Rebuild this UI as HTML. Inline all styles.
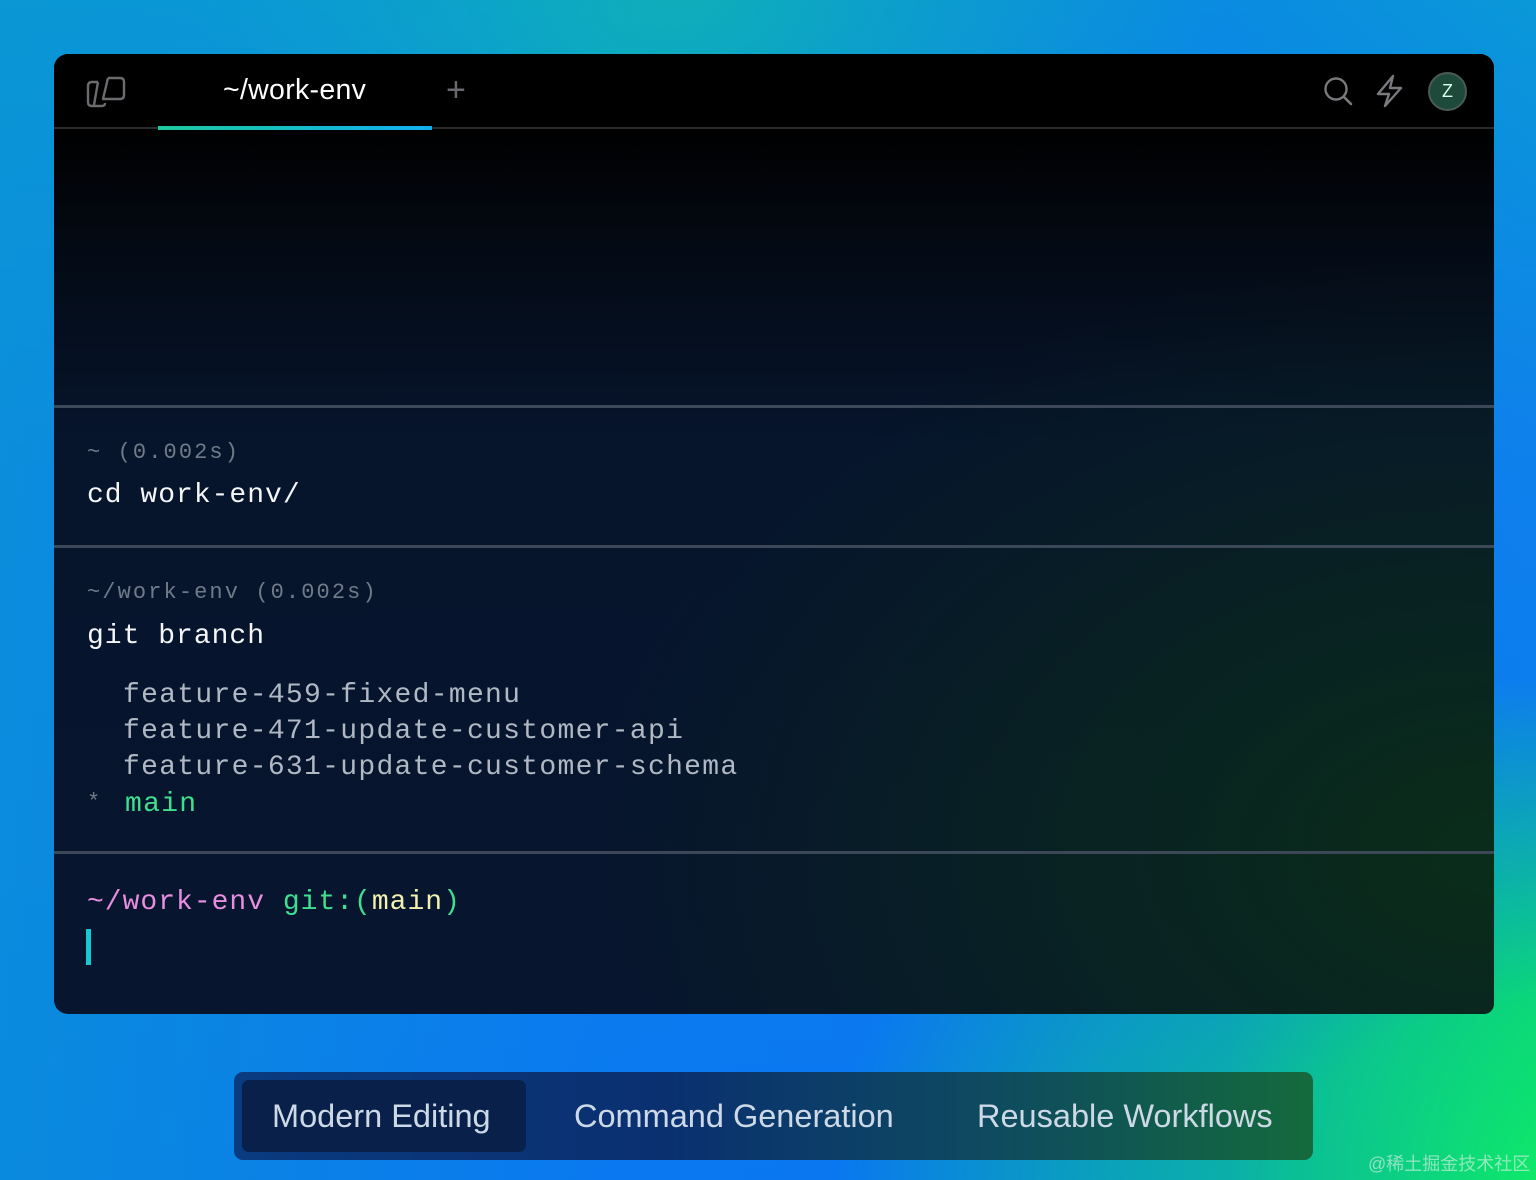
<!DOCTYPE html>
<html><head><meta charset="utf-8"><style>
*{margin:0;padding:0;box-sizing:border-box}
html,body{width:1536px;height:1180px;overflow:hidden}
body{position:relative;font-family:"Liberation Sans",sans-serif;
background:
radial-gradient(ellipse 700px 500px at 1536px 1180px,#0ee86a 0%,#0bd878 35%,rgba(10,200,150,0) 100%),
radial-gradient(ellipse 500px 300px at 700px 0px,#0eb0b8 0%,rgba(14,170,190,0) 100%),
linear-gradient(180deg,#0a98d8 0%,#0e80ec 40%,#0a78f0 100%);}
.bgl{position:absolute;inset:0;background:linear-gradient(90deg,rgba(10,150,210,.6) 0%,rgba(10,120,240,0) 40%,rgba(10,110,245,0.3) 80%,rgba(0,0,0,0) 100%)}
.win{position:absolute;left:54px;top:54px;width:1440px;height:960px;border-radius:14px 14px 10px 14px;overflow:hidden;
background:
radial-gradient(ellipse 900px 600px at 1440px 800px,rgba(10,45,25,1) 0%,rgba(10,45,25,0) 100%),
linear-gradient(180deg,#000 0%,#000 8%,#040a14 20%,#06142c 40%,#07152e 100%);}
.hdr{position:absolute;left:0;top:0;width:1440px;height:75px;background:#000;border-bottom:2px solid #2a2a2c}
.tab{position:absolute;left:104px;top:72px;width:274px;height:4px;background:linear-gradient(90deg,#1ec8a0,#10b0f0)}
.tabt{position:absolute;left:169px;top:20px;font-size:28.5px;color:#fff;letter-spacing:0.3px}
.sep{position:absolute;left:0;width:1440px;height:3px;background:#3c4858}
.m{position:absolute;font-family:"Liberation Mono",monospace;white-space:pre;line-height:32px}
.g{font-size:22px;color:#707a88;letter-spacing:2.1px}
.w{font-size:28px;color:#f4f6f8;letter-spacing:1px}
.b{font-size:28px;color:#b0b8c4;letter-spacing:1.3px}
.bar{position:absolute;left:234px;top:1072px;width:1079px;height:88px;border-radius:9px;background:linear-gradient(90deg,#0a3a80 0%,#0a3070 40%,#0e4a60 70%,#146a3c 100%)}
.act{position:absolute;left:8px;top:8px;width:284px;height:72px;border-radius:7px;background:#09204a}
.bt{position:absolute;top:26px;font-size:32.5px;color:#cdd9e6}
</style></head><body>
<div class="bgl"></div>
<div class="win">
 <div class="hdr">
  <svg style="position:absolute;left:30px;top:20px" width="44" height="36" viewBox="0 0 44 36">
   <path d="M14 8 H8 Q4 8 4 12 V28 Q4 32 8 32 H18 Q21 32 21 29 L21 29 M14 8 L10 31" fill="none" stroke="#6c6c70" stroke-width="2.4"/>
   <path d="M24 4 H36 Q40 4 40 8 V21 Q40 25 36 25 H24 L19 25 L24 4" fill="none" stroke="#6c6c70" stroke-width="2.4" stroke-linejoin="round"/>
  </svg>
  <div class="tabt">~/work-env</div>
  <div style="position:absolute;left:392px;top:17px;font-size:34px;color:#6a6a6e;font-weight:300">+</div>
  <svg style="position:absolute;left:1264px;top:18px" width="120" height="40" viewBox="0 0 120 40">
   <circle cx="18" cy="17" r="10.5" fill="none" stroke="#7a7a7e" stroke-width="2.4"/>
   <path d="M26 25 L33 32" stroke="#7a7a7e" stroke-width="2.6" stroke-linecap="round"/>
   <path d="M75 4 L60 22 H71 L67 34 L83 16 H72 Z" fill="none" stroke="#7a7a7e" stroke-width="2.4" stroke-linejoin="round"/>
  </svg>
  <div style="position:absolute;left:1374px;top:18px;width:39px;height:39px;border-radius:50%;background:#1d4a3a;border:2px solid #4a5a56;color:#dfe;font-size:18px;text-align:center;line-height:35px">Z</div>
 </div>
 <div class="tab"></div>
 <div class="sep" style="top:351px"></div>
 <div class="m g" style="left:33px;top:383px">~ (0.002s)</div>
 <div class="m w" style="left:33px;top:426px">cd work-env/</div>
 <div class="sep" style="top:491px"></div>
 <div class="m g" style="left:33px;top:523px">~/work-env (0.002s)</div>
 <div class="m w" style="left:33px;top:567px">git branch</div>
 <div class="m b" style="left:69px;top:626px">feature-459-fixed-menu</div>
 <div class="m b" style="left:69px;top:662px">feature-471-update-customer-api</div>
 <div class="m b" style="left:69px;top:698px">feature-631-update-customer-schema</div>
 <div class="m g" style="left:33px;top:733px">*</div>
 <div class="m b" style="left:71px;top:735px;color:#3ee090">main</div>
 <div class="sep" style="top:797px"></div>
 <div class="m w" style="left:33px;top:833px"><span style="color:#e88ee0">~/work-env</span> <span style="color:#3ee090">git:(</span><span style="color:#f2f0b0">main</span><span style="color:#3ee090">)</span></div>
 <div style="position:absolute;left:32px;top:875px;width:5px;height:36px;background:#18c8d0"></div>
</div>
<div class="bar">
 <div class="act"></div>
 <div class="bt" style="left:38px">Modern Editing</div>
 <div class="bt" style="left:340px">Command Generation</div>
 <div class="bt" style="left:743px">Reusable Workflows</div>
</div>
<div style="position:absolute;left:1368px;top:1150px;font-size:18px;color:rgba(230,240,235,.6);font-family:'Liberation Sans','Noto Sans CJK SC',sans-serif">@稀土掘金技术社区</div>
</body></html>
